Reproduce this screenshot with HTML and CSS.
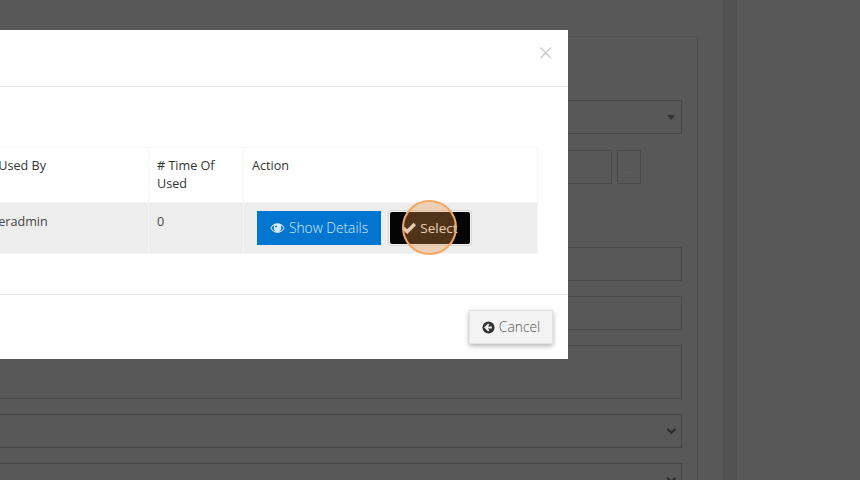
FILE: index.html
```html
<!DOCTYPE html>
<html lang="en">
<head>
<meta charset="utf-8">
<title>Select record</title>
<link rel="stylesheet" href="styles.css">
</head>
<body>
<div class="page">
  <main class="main">
    <section class="panel">
      <div class="field field-select"><span class="caret"></span></div>
      <div class="row">
        <div class="field grow"></div>
        <div class="lookup">...</div>
      </div>
      <div class="field"></div>
      <div class="field"></div>
      <div class="field area"></div>
      <div class="field field-select">
        <svg class="chev" viewBox="0 0 12 8"><path d="M1.500 1.500 6 6l4.500-4.500" /></svg>
      </div>
      <div class="field field-select">
        <svg class="chev" viewBox="0 0 12 8"><path d="M1.500 1.500 6 6l4.500-4.500" /></svg>
      </div>
    </section>
  </main>
  <div class="gutter"></div>
  <div class="rest"></div>
</div>

<div class="modal">
  <header class="modal-head"><span class="close">×</span></header>
  <div class="modal-body">
    <table class="grid">
      <thead>
        <tr>
          <th class="c-user">Last Used By</th>
          <th class="c-time"># Time Of Used</th>
          <th class="c-act">Action</th>
        </tr>
      </thead>
      <tbody>
        <tr>
          <td>Owneradmin</td>
          <td>0</td>
          <td class="cell-actions">
            <div class="actions">
              <button class="btn btn-blue" type="button">
                <svg class="ico ico-eye" viewBox="0 0 16 12"><path fill="currentColor" fill-rule="evenodd" d="M8 .8C4.700.8 2 2.700.3 6 2 9.300 4.700 11.200 8 11.200S14 9.300 15.700 6C14 2.700 11.300.8 8 .8ZM4.500 3c-.3.8-.5 1.900-.5 3 0 2.200 1.800 4 4 4s4-1.800 4-4c0-1.100-.2-2.200-.5-3 1.300.7 2.400 1.700 3.200 3-1.500 2.500-4 4-6.700 4S2.800 8.500 1.300 6c.8-1.300 1.900-2.300 3.200-3Z"/><circle cx="8" cy="5.500" r="3.200" fill="currentColor"/><circle cx="6.600" cy="4.300" r="1" fill="#0275d0"/></svg>
                Show Details
              </button>
              <button class="btn btn-black" type="button">
                <svg class="ico ico-check" viewBox="0 0 14 12"><path fill="none" stroke="currentColor" stroke-width="3.400" d="M1.400 6 5.200 9.700 12.800 2"/></svg>
                Select
              </button>
            </div>
          </td>
        </tr>
      </tbody>
    </table>
  </div>
  <footer class="modal-foot">
    <button class="btn btn-cancel" type="button">
      <svg class="ico ico-back" viewBox="0 0 14 14"><circle cx="7" cy="7" r="6.500" fill="currentColor"/><path fill="none" stroke="#f3f3f3" stroke-width="2" d="M7.300 3.300 3.700 7l3.600 3.700M4 7h6.600"/></svg>
      Cancel
    </button>
  </footer>
</div>
<div class="spot"></div>
</body>
</html>
```
FILE: styles.css
```css
* { box-sizing: border-box; }
html, body { margin: 0; height: 100%; }
body {
  width: 860px;
  height: 480px;
  overflow: hidden;
  position: relative;
  background: #585858;
  font-family: "Open Sans", "Liberation Sans", sans-serif;
  font-size: 12.6px;
  color: #333;
}
.page { display: flex; height: 480px; overflow: hidden; }
.main { width: 723px; overflow: hidden; }
.gutter { width: 14px; background: #525252; }
.rest { flex: 1; }
.panel {
  margin: 36px 25px 0 -30px;
  padding: 63px 15px 0;
  border: 1px solid #4e4e4e;
  display: flex;
  flex-direction: column;
  gap: 15px;
  height: 500px;
}
.field {
  height: 34px;
  flex: none;
  border: 1px solid #4a4a4a;
  display: flex;
  align-items: center;
  justify-content: flex-end;
  padding-right: 4px;
}
.field-select { border-color: #454545; }
.row {
  display: flex;
  gap: 5px;
  margin-top: 1px;
  margin-bottom: 48px;
  padding-right: 41px;
  flex: none;
}
.row .grow { flex: 1; }
.lookup {
  width: 24px;
  height: 34px;
  border: 1px solid #4a4a4a;
  color: #6b6b6b;
  font-size: 11px;
  line-height: 36px;
  text-align: center;
}
.area { height: 54px; }
.caret {
  width: 0;
  height: 0;
  margin-right: 2px;
  border: 4px solid transparent;
  border-top: 5px solid #333;
  border-bottom: 0;
}
.chev {
  width: 11px;
  height: 8px;
  fill: none;
  stroke: #2b2b2b;
  stroke-width: 2.200;
}
.modal {
  position: absolute;
  left: -68px;
  top: 30px;
  width: 636px;
  height: 329px;
  background: #fff;
  display: flex;
  flex-direction: column;
}
.modal-head {
  height: 57px;
  border-bottom: 1px solid #e5e5e5;
  display: flex;
  justify-content: flex-end;
  padding: 7px 15px 0 0;
  flex: none;
}
.close {
  font-size: 26px;
  line-height: 30px;
  color: #c4c4c4;
  font-weight: 300;
}
.modal-body { padding: 60px 31px 0 30px; height: 207px; flex: none; }
.grid {
  width: 575px;
  border-collapse: collapse;
  table-layout: fixed;
  color: #333;
  line-height: 18px;
}
.grid th, .grid td {
  padding: 8px;
  text-align: left;
  vertical-align: top;
  border: 1px solid #f6f6f6;
  font-weight: 400;
}
.grid th { padding-top: 9px; padding-bottom: 9px; }
.grid td { height: 51px; padding-top: 10px; background: #eeeded; color: #444; }
.c-user { width: 186px; }
.c-time { width: 95px; }
.c-act { width: 294px; }
.grid .cell-actions { padding: 8px; }
.actions { display: flex; align-items: center; gap: 9px; margin-left: 5px; height: 34px; }
.btn {
  font: inherit;
  font-size: 13.500px;
  line-height: 18px;
  display: inline-flex;
  align-items: center;
  justify-content: center;
  gap: 4px;
  padding: 0;
  border: 0;
}
.ico { flex: none; }
.ico-eye { width: 15px; height: 12px; }
.ico-check { width: 14px; height: 12px; }
.ico-back { width: 13px; height: 13px; }
.btn-blue { width: 124px; height: 34px; background: #0275d0; color: #d6ebfb; font-size: 13.800px; font-weight: 300; }
.btn-black {
  width: 80px;
  height: 32px;
  background: #040404;
  color: #e8e8e8;
  border-radius: 2px;
  box-shadow: 0 0 0 1px #f4f4f4, 0 0 0 2px #d5d5d5;
}
.modal-foot {
  flex: 1;
  border-top: 1px solid #e5e5e5;
  display: flex;
  justify-content: flex-end;
  padding: 15px 15px 0 0;
}
.btn-cancel {
  width: 84px;
  height: 34px;
  background: #f3f3f3;
  color: #555;
  font-size: 13.800px;
  font-weight: 300;
  border: 1px solid #e2e2e2;
  box-shadow: 0 2px 5px rgba(0, 0, 0, .3);
}
.btn-cancel .ico { color: #333; }
.spot {
  position: absolute;
  left: 402px;
  top: 200px;
  width: 55px;
  height: 55px;
  border-radius: 50%;
  background: rgba(240, 150, 70, .33);
  border: 2px solid #f0a868;
}
```
